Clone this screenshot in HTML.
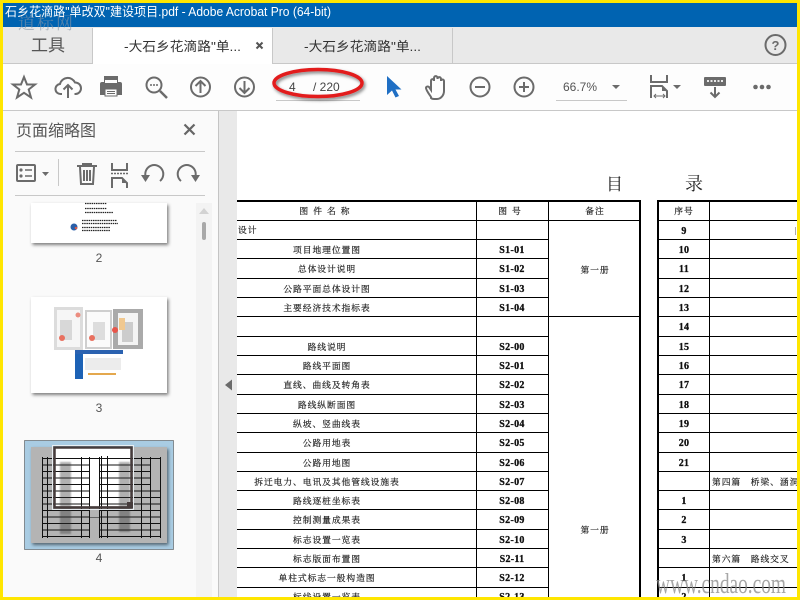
<!DOCTYPE html>
<html><head><meta charset="utf-8"><style>
html,body{margin:0;padding:0;width:800px;height:600px;overflow:hidden;background:#fff}
svg{display:block;position:absolute;left:0;top:0}
text{font-family:"Liberation Sans","Noto Sans CJK SC",sans-serif}
.s{font-family:"Liberation Serif","Noto Serif CJK SC",serif;font-size:8.8px;fill:#222;stroke:#222;stroke-width:.18;letter-spacing:.9px;text-anchor:middle}
.l{text-anchor:start}
.b{font-family:"Liberation Serif",serif;font-size:10px;font-weight:bold;fill:#111;stroke:#111;stroke-width:.3;text-anchor:middle;letter-spacing:.3px}
.i{fill:none;stroke:#6b6b6b;stroke-width:2}
.f{fill:#6b6b6b}
</style></head><body>
<svg width="800" height="600" viewBox="0 0 800 600">
<defs>
<pattern id="rows" width="10" height="6.5" patternUnits="userSpaceOnUse" x="0" y="458"><rect width="10" height="1" fill="#111"/></pattern>
<filter id="sh" x="-20%" y="-30%" width="140%" height="180%"><feDropShadow dx="1.5" dy="2" stdDeviation="1.5" flood-color="#000" flood-opacity=".5"/></filter>
<filter id="bl"><feGaussianBlur stdDeviation=".8"/></filter>
<clipPath id="page"><rect x="237" y="111" width="560" height="486"/></clipPath>
<clipPath id="ttl"><rect x="3" y="3" width="794" height="24"/></clipPath>
</defs>

<!-- title bar -->
<rect x="0" y="3" width="800" height="24" fill="#0063b1"/>
<text x="5" y="16" font-size="12.5" fill="#fff" textLength="326" lengthAdjust="spacingAndGlyphs" clip-path="url(#ttl)">石乡花滴路"单改双"建设项目.pdf - Adobe Acrobat Pro (64-bit)</text>

<!-- tab bar -->
<rect x="0" y="27" width="800" height="36" fill="#e9e9e9"/>
<rect x="0" y="63" width="800" height="1" fill="#c8c8c8"/>
<rect x="92" y="28" width="181" height="36" fill="#fff"/>
<rect x="92" y="28" width="1" height="36" fill="#c8c8c8"/>
<rect x="272" y="28" width="1" height="36" fill="#c8c8c8"/>
<rect x="452" y="28" width="1" height="35" fill="#c8c8c8"/>
<text x="31" y="51" font-size="17" fill="#555">工具</text>
<text x="124" y="51" font-size="13" fill="#333" textLength="117" lengthAdjust="spacingAndGlyphs">-大石乡花滴路"单...</text>
<path d="M256.500 42.500l6 6m0-6l-6 6" stroke="#555" stroke-width="2" fill="none"/>
<text x="304" y="51" font-size="13" fill="#333" textLength="117" lengthAdjust="spacingAndGlyphs">-大石乡花滴路"单...</text>
<circle cx="775.500" cy="45" r="10" class="i"/>
<text x="775.500" y="50" font-size="13" font-weight="bold" fill="#6b6b6b" text-anchor="middle">?</text>
<text x="18" y="29" font-size="17" fill="#8a98a8" fill-opacity=".6" letter-spacing="2" style="font-family:'Noto Serif CJK SC',serif">道标网</text>

<!-- toolbar -->
<rect x="0" y="64" width="800" height="46" fill="#fdfdfd"/>
<rect x="0" y="110" width="800" height="1" fill="#c8c8c8"/>
<path class="i" d="M24 77l3 7.500h8l-6.300 5 2.300 8-7-4.700-7 4.700 2.300-8-6.300-5h8z" stroke-width="1.800"/>
<path class="i" d="M62 94h-1a5 5 0 0 1-1-10a8 8 0 0 1 15-1.500a5.700 5.700 0 0 1 .5 11.500h-1"/>
<path class="i" d="M68 98V85m-4.500 4.500l4.500-4.500 4.500 4.500"/>
<path class="f" d="M104 76h14v7h-14zM100 84a2 2 0 0 1 2-2h18a2 2 0 0 1 2 2v11h-22z"/>
<rect x="105" y="80" width="12" height="3" fill="#fdfdfd"/>
<rect x="105" y="89" width="12" height="7" fill="#fdfdfd" stroke="#6b6b6b"/>
<rect x="107" y="91" width="8" height="1" fill="#6b6b6b"/><rect x="107" y="93" width="8" height="1" fill="#6b6b6b"/>
<circle cx="154" cy="85" r="7.500" class="i"/>
<path d="M160 91l7 7" stroke="#6b6b6b" stroke-width="2.500"/>
<circle cx="151" cy="85" r="1" class="f"/><circle cx="154" cy="85" r="1" class="f"/><circle cx="157" cy="85" r="1" class="f"/>
<circle cx="200.500" cy="87" r="9.500" class="i"/>
<path class="i" d="M200.500 93V81m-5 5l5-5 5 5"/>
<circle cx="244.500" cy="87" r="9.500" class="i"/>
<path class="i" d="M244.500 81v12m-5-5l5 5 5-5"/>

<!-- page number -->
<rect x="276" y="100" width="84" height="1" fill="#c8c8c8"/>
<text x="289" y="91" font-size="12" fill="#444">4</text>
<text x="313" y="91" font-size="12" fill="#444">/ 220</text>
<ellipse cx="318" cy="83" rx="44" ry="13.500" fill="none" stroke="#e21a1f" stroke-width="3.500" filter="url(#sh)"/>

<path d="M387 76v19l5-4.500 3.500 7 3.500-1.500-3.500-6.500h6z" fill="#1f6fc4"/>
<path class="i" d="M431 97c-2-3-5-7-5-9 0-1.500 2-2 3-1l2 3V81c0-2.500 3-2.500 3 0v-3c0-2.500 3.500-2.500 3.500 0v1c0-2.500 3.500-2.500 3.500 0v2c0-2 3-2 3 0v10c0 4-3 8-7 8h-3c-1.500 0-2.500-.5-3-1z" stroke-width="1.800"/>
<circle cx="480" cy="87" r="9.500" class="i"/><path class="i" d="M475 87h10"/>
<circle cx="524" cy="87" r="9.500" class="i"/><path class="i" d="M519 87h10m-5-5v10"/>
<text x="563" y="91" font-size="12" fill="#555">66.7%</text>
<path d="M612 85h8l-4 4z" class="f"/>
<rect x="556" y="100" width="71" height="1" fill="#c8c8c8"/>
<path class="i" d="M651 75v7h16v-7M651 98V86h11l5 5v7"/>
<path d="M662 85v6h6" fill="#6b6b6b"/>
<path d="M654 96h11m-9-2l-2 2 2 2m7-4l2 2-2 2" stroke="#6b6b6b" fill="none"/>
<path d="M673 85h8l-4 4z" class="f"/>
<rect x="704" y="77" width="22" height="9" rx="1" fill="#6b6b6b"/>
<path d="M707 81h16" stroke="#e8e8e8" stroke-width="2" stroke-dasharray="2 1.500"/>
<path class="i" d="M715 87v10m-4.500-4.500l4.500 4.500 4.500-4.500" stroke-width="2.300"/>
<circle cx="755.500" cy="87" r="2.300" class="f"/><circle cx="762" cy="87" r="2.300" class="f"/><circle cx="768.500" cy="87" r="2.300" class="f"/>

<!-- left panel -->
<rect x="0" y="111" width="218" height="489" fill="#fafafa"/>
<rect x="218" y="111" width="1" height="489" fill="#c4c4c4"/>
<rect x="219" y="111" width="18" height="489" fill="#e9e9e9"/>
<path d="M225 385l7-5.500v11z" fill="#6b6b6b"/>
<text x="16" y="136" font-size="16" fill="#555">页面缩略图</text>
<path d="M184.500 124.500l10 10m0-10l-10 10" stroke="#666" stroke-width="2.200" fill="none"/>
<rect x="15" y="151" width="190" height="1" fill="#c8c8c8"/>
<rect x="15" y="195" width="190" height="1" fill="#c8c8c8"/>
<rect x="58" y="159" width="1" height="27" fill="#c8c8c8"/>
<rect x="17" y="165" width="18" height="16" rx="1" class="i"/>
<circle cx="21" cy="170" r="1.600" class="f"/><circle cx="21" cy="176" r="1.600" class="f"/>
<path d="M25 170h7M25 176h7" stroke="#6b6b6b" stroke-width="1.600"/>
<path d="M42 172h7l-3.500 4z" class="f"/>
<path class="i" d="M77 166h20M80 167l1 17h12l1-17M83 166v-2h8v2M84 170v11M87 170v11M90 170v11" stroke-width="1.800"/>
<path class="i" d="M112 163v7h15v-7M112 184v-6h10l5 5v1"/>
<path class="i" d="M112 178v10M127 183v5"/>
<path d="M111 173.500h17" stroke="#6b6b6b" stroke-width="1.500" stroke-dasharray="2 1"/>
<path d="M122 178v5h5" fill="#6b6b6b"/>
<path class="i" d="M160 181A9 9 0 1 0 145.500 176" stroke-width="2.200"/>
<path d="M141 175h9l-4.500 7z" class="f"/>
<path class="i" d="M181 181A9 9 0 1 1 195.500 176" stroke-width="2.200"/>
<path d="M191 175h9l-4.500 7z" class="f"/>

<!-- scrollbar -->
<rect x="196" y="203" width="16" height="397" fill="#f3f3f3"/>
<path d="M199 214l5-6 5 6z" fill="#d2d2d2"/>
<rect x="202" y="222" width="4" height="18" rx="2" fill="#a8a8a8"/>

<!-- thumb 2 -->
<rect x="31" y="203" width="136" height="40" fill="#fff" filter="url(#sh)"/>
<g stroke="#222" stroke-width="1.300" stroke-dasharray="1.500 .7" fill="none">
<path d="M85 203.500h22M85 208.500h22M85 212.500h28M82 220.500h35M82 223.500h36M82 227.500h28M82 230.500h28"/>
</g>
<circle cx="74" cy="227" r="3.500" fill="#2a5fa8"/>
<circle cx="76" cy="228" r="1.300" fill="#d65a4a"/>
<text x="99" y="262" font-size="12" fill="#555" text-anchor="middle">2</text>

<!-- thumb 3 -->
<rect x="31" y="297" width="136" height="96" fill="#fff" filter="url(#sh)"/>
<rect x="54" y="307" width="29" height="43" fill="#dcdcdc"/><rect x="57" y="310" width="23" height="37" fill="#f6f6f6"/>
<rect x="85" y="310" width="27" height="39" fill="#cfcfcf"/><rect x="87" y="312" width="23" height="35" fill="#fbfbfb"/>
<rect x="113" y="309" width="30" height="40" fill="#aaa"/><rect x="118" y="313" width="20" height="32" fill="#f4f4f4"/>
<rect x="60" y="320" width="12" height="20" fill="#d8d8d8"/><rect x="93" y="322" width="12" height="18" fill="#ddd"/><rect x="122" y="322" width="11" height="20" fill="#ccc"/>
<rect x="119" y="318" width="6" height="12" fill="#f0c890"/>
<circle cx="62" cy="338" r="3" fill="#e8705f"/><circle cx="92" cy="338" r="3" fill="#e8705f"/><circle cx="115" cy="330" r="3" fill="#e8554a"/><circle cx="78" cy="315" r="2.500" fill="#ec8d80"/>
<rect x="75" y="350" width="48" height="4" fill="#2b62b0"/>
<rect x="75" y="354" width="8" height="25" fill="#1d62b5"/>
<rect x="85" y="358" width="36" height="12" fill="#ececec"/>
<rect x="88" y="373" width="28" height="2" fill="#e4a84e"/>
<text x="99" y="412" font-size="12" fill="#555" text-anchor="middle">3</text>

<!-- thumb 4 -->
<rect x="24.500" y="440.500" width="149" height="109" fill="#a9cce3" stroke="#333" stroke-dasharray="1 1"/>
<rect x="31" y="447" width="136" height="96" fill="#b4b4b4" filter="url(#sh)"/>
<rect x="54" y="447" width="77" height="59" fill="#fff"/>
<rect x="42" y="458" width="119" height="79" fill="url(#rows)"/>
<g fill="#111">
<rect x="42" y="457" width="1" height="81"/><rect x="47" y="457" width="1" height="81"/><rect x="81" y="457" width="1" height="81"/><rect x="89" y="457" width="1" height="81"/><rect x="99" y="457" width="1" height="81"/><rect x="101" y="456" width="1" height="82"/><rect x="107" y="456" width="1" height="82"/><rect x="141" y="457" width="1" height="81"/><rect x="150" y="457" width="1" height="81"/><rect x="160" y="457" width="1" height="81"/>
</g>
<rect x="90" y="460" width="9" height="10" fill="#fff"/><rect x="90" y="471" width="9" height="35" fill="#fff"/>
<rect x="90" y="506" width="9" height="11" fill="#b4b4b4"/><rect x="90" y="518" width="9" height="19" fill="#b4b4b4"/>
<rect x="151" y="460" width="9" height="27" fill="#b4b4b4"/>
<g fill="#333" opacity=".38" filter="url(#bl)"><rect x="60" y="462" width="11" height="72"/><rect x="119" y="462" width="11" height="70"/></g>
<rect x="54.500" y="447.500" width="77" height="60" fill="none" stroke="#463c3c" stroke-width="2.500"/>
<rect x="52.500" y="445.500" width="81" height="64" fill="none" stroke="#e8eef2" stroke-width="1"/>
<rect x="127" y="502" width="6" height="6" fill="#463c3c"/>
<text x="99" y="562" font-size="12" fill="#555" text-anchor="middle">4</text>

<!-- document -->
<rect x="237" y="111" width="563" height="489" fill="#fff"/>
<g clip-path="url(#page)">
<text x="606" y="190" font-size="17" fill="#222" style="font-family:'Noto Serif CJK SC',serif">目</text>
<text x="685" y="190" font-size="18" fill="#222" style="font-family:'Noto Serif CJK SC',serif">录</text>

<g fill="#000">
<rect x="237" y="200" width="403" height="2"/>
<rect x="658" y="200" width="142" height="2"/>
<rect x="476" y="200" width="1" height="400"/>
<rect x="548" y="200" width="1" height="400"/>
<rect x="639" y="200" width="2" height="400"/>
<rect x="657" y="200" width="2" height="400"/>
<rect x="709" y="200" width="1" height="400"/>
</g>
<g stroke="#000" stroke-width="1">
<path d="M237 220.500H548M549 220.500H640M658 220.500H800"/>
<path d="M237 239.500H548M658 239.500H800M237 258.500H548M658 258.500H800M237 278.500H548M658 278.500H800M237 297.500H548M658 297.500H800"/>
<path d="M237 316.500H640M658 316.500H800"/>
<path d="M237 336.500H548M658 336.500H800M237 355.500H548M658 355.500H800M237 374.500H548M658 374.500H800M237 394.500H548M658 394.500H800M237 413.500H548M658 413.500H800M237 432.500H548M658 432.500H800M237 452.500H548M658 452.500H800M237 471.500H548M658 471.500H800M237 490.500H548M658 490.500H800M237 509.500H548M658 509.500H800M237 529.500H548M658 529.500H800M237 548.500H548M658 548.500H800M237 567.500H548M658 567.500H800M237 587.500H548M658 587.500H800"/>
</g>

<text class="s" x="327" y="214" style="letter-spacing:5px">图件名称</text>
<text class="s" x="512" y="214" style="letter-spacing:5px">图号</text>
<text class="s" x="595" y="214">备注</text>
<text class="s" x="684" y="214">序号</text>

<text class="s l" x="238" y="233">设计</text>
<text class="s" x="327" y="253">项目地理位置图</text>
<text class="s" x="327" y="272">总体设计说明</text>
<text class="s" x="327" y="292">公路平面总体设计图</text>
<text class="s" x="327" y="311">主要经济技术指标表</text>
<text class="s" x="327" y="350">路线说明</text>
<text class="s" x="327" y="369">路线平面图</text>
<text class="s" x="327" y="388">直线、曲线及转角表</text>
<text class="s" x="327" y="408">路线纵断面图</text>
<text class="s" x="327" y="427">纵坡、竖曲线表</text>
<text class="s" x="327" y="446">公路用地表</text>
<text class="s" x="327" y="466">公路用地图</text>
<text class="s" x="327" y="485">拆迁电力、电讯及其他管线设施表</text>
<text class="s" x="327" y="504">路线逐桩坐标表</text>
<text class="s" x="327" y="523">控制测量成果表</text>
<text class="s" x="327" y="543">标志设置一览表</text>
<text class="s" x="327" y="562">标志版面布置图</text>
<text class="s" x="327" y="581">单柱式标志一般构造图</text>
<text class="s" x="327" y="600">标线设置一览表</text>

<text class="b" x="512" y="253">S1-01</text>
<text class="b" x="512" y="272">S1-02</text>
<text class="b" x="512" y="292">S1-03</text>
<text class="b" x="512" y="311">S1-04</text>
<text class="b" x="512" y="350">S2-00</text>
<text class="b" x="512" y="369">S2-01</text>
<text class="b" x="512" y="388">S2-02</text>
<text class="b" x="512" y="408">S2-03</text>
<text class="b" x="512" y="427">S2-04</text>
<text class="b" x="512" y="446">S2-05</text>
<text class="b" x="512" y="466">S2-06</text>
<text class="b" x="512" y="485">S2-07</text>
<text class="b" x="512" y="504">S2-08</text>
<text class="b" x="512" y="523">S2-09</text>
<text class="b" x="512" y="543">S2-10</text>
<text class="b" x="512" y="562">S2-11</text>
<text class="b" x="512" y="581">S2-12</text>
<text class="b" x="512" y="600">S2-13</text>

<text class="s" x="595" y="273">第一册</text>
<text class="s" x="595" y="533">第一册</text>

<text class="b" x="684" y="234">9</text>
<text class="b" x="684" y="253">10</text>
<text class="b" x="684" y="272">11</text>
<text class="b" x="684" y="292">12</text>
<text class="b" x="684" y="311">13</text>
<text class="b" x="684" y="330">14</text>
<text class="b" x="684" y="350">15</text>
<text class="b" x="684" y="369">16</text>
<text class="b" x="684" y="388">17</text>
<text class="b" x="684" y="408">18</text>
<text class="b" x="684" y="427">19</text>
<text class="b" x="684" y="446">20</text>
<text class="b" x="684" y="466">21</text>
<text class="b" x="684" y="504">1</text>
<text class="b" x="684" y="523">2</text>
<text class="b" x="684" y="543">3</text>
<text class="b" x="684" y="581">1</text>
<text class="b" x="684" y="600">2</text>
<text class="s l" x="712" y="485">第四篇　桥梁、涵洞</text>
<text class="s l" x="712" y="562">第六篇　路线交叉</text>
<rect x="795" y="227" width="1" height="8" fill="#aaa"/>
</g>

<text x="656" y="593" font-size="29" fill="#8a8a8a" fill-opacity=".75" textLength="130" lengthAdjust="spacingAndGlyphs" style="font-family:'Liberation Serif',serif">www.cndao.com</text>

<!-- yellow frame -->
<path d="M0 0H800V600H0z M3 3V597H797V3z" fill="#ffe600" fill-rule="evenodd"/>
</svg>
</body></html>
